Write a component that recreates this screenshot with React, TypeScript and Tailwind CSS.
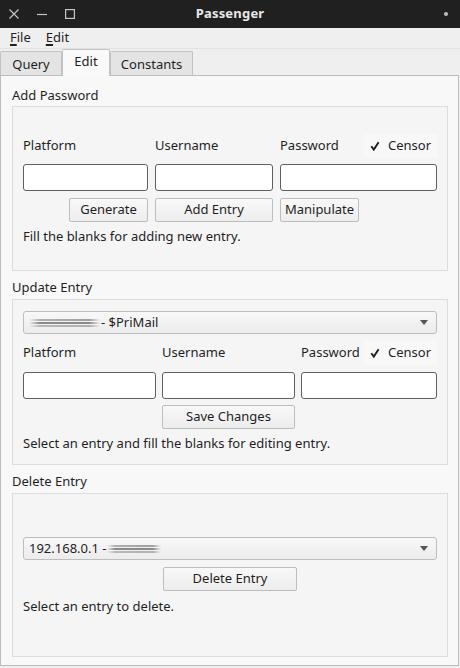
import React from "react";

const font = { fontFamily: '"Noto Sans", "Open Sans", sans-serif' };

function Blur({ w }: { w: number }) {
  return (
    <span className="inline-flex flex-col justify-center gap-[1px]" style={{ width: w }}>
      <span className="block h-[2px] w-full bg-[linear-gradient(90deg,transparent,#b0b0b0_15%,#a0a0a0_85%,transparent)] blur-[0.6px]" />
      <span className="block h-[2px] w-full bg-[linear-gradient(90deg,transparent,#8a8a8a_15%,#8a8a8a_85%,transparent)] blur-[0.6px]" />
      <span className="block h-[2px] w-full bg-[linear-gradient(90deg,transparent,#b8b8b8_15%,#b0b0b0_85%,transparent)] blur-[0.6px]" />
    </span>
  );
}

function Input() {
  return <div className="h-[27px] rounded-[3px] border border-[#5f5f5f] bg-white" />;
}

function Button({ label, className = "" }: { label: string; className?: string }) {
  return (
    <div
      className={
        "flex h-[24px] items-center justify-center rounded-[2px] border border-[#bdbdbd] bg-[linear-gradient(#f8f8f8,#ededed)] text-[13px] text-[#1f1f1f] " +
        className
      }
    >
      {label}
    </div>
  );
}

function Combo({ children }: { children: React.ReactNode }) {
  return (
    <div className="flex h-[23px] items-center rounded-[3px] border border-[#bdbdbd] bg-[linear-gradient(#f8f8f8,#ececec)] pl-[5px] pr-[8px] text-[13px] text-[#1f1f1f]">
      <div className="flex flex-1 items-center">{children}</div>
      <svg width="8" height="5" viewBox="0 0 8 5">
        <path d="M0 0 L8 0 L4 5 Z" fill="#555" />
      </svg>
    </div>
  );
}

function Censor() {
  return (
    <div className="flex h-[24px] items-center gap-[8px] bg-[#f8f8f8] px-[6px]">
      <svg width="10" height="10" viewBox="0 0 10 10">
        <path d="M1.3 5.2 L3.8 8.6 L8.6 1.2" fill="none" stroke="#1f1f1f" strokeWidth="1.9" />
      </svg>
      <span>Censor</span>
    </div>
  );
}

function GroupLabel({ text }: { text: string }) {
  return <div className="flex h-[18px] items-center pl-[11px] text-[13px]">{text}</div>;
}

export default function App() {
  return (
    <div className="flex h-[668px] w-[460px] flex-col bg-[#efefef] text-[13px] text-[#1f1f1f]" style={font}>
      {/* title bar */}
      <div className="grid h-[28px] grid-cols-[1fr_auto_1fr] items-center bg-[#202020] text-[#dedede]">
        <div className="flex items-center gap-[18px] pl-[9px]">
          <svg width="10" height="10" viewBox="0 0 10 10">
            <path d="M0.5 0.5 L9.5 9.5 M9.5 0.5 L0.5 9.5" stroke="#c4c4c4" strokeWidth="1.2" />
          </svg>
          <svg width="10" height="10" viewBox="0 0 10 10">
            <path d="M0 5.5 L10 5.5" stroke="#c4c4c4" strokeWidth="1.2" />
          </svg>
          <svg width="10" height="10" viewBox="0 0 10 10">
            <rect x="0.6" y="0.6" width="8.8" height="8.8" fill="none" stroke="#c4c4c4" strokeWidth="1.2" />
          </svg>
        </div>
        <div className="text-[13px] font-bold tracking-[0.2px] text-[#e8e8e8]">Passenger</div>
        <div className="flex justify-end pr-[12px]">
          <div className="h-[4px] w-[4px] rounded-full bg-[#bdbdbd]" />
        </div>
      </div>

      {/* menu */}
      <div className="flex h-[21px] items-center gap-[15px] border-b border-[#e2e2e2] pl-[10px]">
        <span>
          <span className="underline decoration-[1.5px] underline-offset-[2px]">F</span>ile
        </span>
        <span>
          <span className="underline decoration-[1.5px] underline-offset-[2px]">E</span>dit
        </span>
      </div>

      {/* tabs */}
      <div className="flex h-[26px] items-end">
        <div className="flex h-[24px] w-[62px] items-center justify-center rounded-t-[2px] border border-b-0 border-[#c2c2c2] bg-[#e4e4e4] pt-[2px]">
          Query
        </div>
        <div className="relative -mb-px flex h-[27px] w-[48px] items-center justify-center rounded-t-[2px] border border-b-0 border-[#c2c2c2] bg-[#f9f9f9] pb-[2px]">
          Edit
        </div>
        <div className="flex h-[24px] w-[83px] items-center justify-center rounded-t-[2px] border border-b-0 border-[#c2c2c2] bg-[#e4e4e4] pt-[2px]">
          Constants
        </div>
      </div>

      {/* panel */}
      <div className="mr-[1px] flex flex-col border border-[#bcbcbc] bg-[#f8f8f8] pt-[11px] pb-[8px] pr-[10px]">
        <GroupLabel text="Add Password" />
        <div className="ml-[11px] mt-[1px] flex h-[165px] flex-col border border-[#dcdcdc] bg-[#f5f5f5] px-[10px] pt-[27px]">
          <div className="grid grid-cols-[125px_118px_1fr] gap-x-[7px]">
            <div className="flex h-[24px] items-center">Platform</div>
            <div className="flex h-[24px] items-center">Username</div>
            <div className="flex h-[24px] items-center justify-between">
              <span>Password</span>
              <Censor />
            </div>
            <div className="mt-[6px]"><Input /></div>
            <div className="mt-[6px]"><Input /></div>
            <div className="mt-[6px]"><Input /></div>
            <div className="mt-[7px] flex justify-end">
              <Button label="Generate" className="w-[79px]" />
            </div>
            <div className="mt-[7px]">
              <Button label="Add Entry" />
            </div>
            <div className="mt-[7px] flex">
              <Button label="Manipulate" className="w-[79px]" />
            </div>
          </div>
          <div className="mt-[6px] flex h-[17px] items-center">Fill the blanks for adding new entry.</div>
        </div>

        <div className="mt-[8px]" />
        <GroupLabel text="Update Entry" />
        <div className="ml-[11px] mt-[2px] flex h-[166px] flex-col border border-[#dcdcdc] bg-[#f5f5f5] px-[10px] pt-[11px]">
          <Combo>
            <Blur w={71} />
            <span className="ml-[1px]">- $PriMail</span>
          </Combo>
          <div className="mt-[7px] grid grid-cols-[133px_133px_1fr] gap-x-[6px]">
            <div className="flex h-[24px] items-center">Platform</div>
            <div className="flex h-[24px] items-center">Username</div>
            <div className="flex h-[24px] items-center justify-between">
              <span>Password</span>
              <Censor />
            </div>
            <div className="mt-[7px]"><Input /></div>
            <div className="mt-[7px]"><Input /></div>
            <div className="mt-[7px]"><Input /></div>
            <div />
            <div className="mt-[6px]">
              <Button label="Save Changes" />
            </div>
            <div />
          </div>
          <div className="mt-[6px] flex h-[17px] items-center">
            Select an entry and fill the blanks for editing entry.
          </div>
        </div>

        <div className="mt-[8px]" />
        <GroupLabel text="Delete Entry" />
        <div className="ml-[11px] mt-[2px] flex h-[164px] flex-col border border-[#dcdcdc] bg-[#f5f5f5] px-[10px] pt-[43px]">
          <Combo>
            <span>192.168.0.1 -</span>
            <Blur w={54} />
          </Combo>
          <div className="mt-[7px] flex justify-center">
            <Button label="Delete Entry" className="w-[134px]" />
          </div>
          <div className="mt-[7px] flex h-[17px] items-center">Select an entry to delete.</div>
        </div>
      </div>
    </div>
  );
}
